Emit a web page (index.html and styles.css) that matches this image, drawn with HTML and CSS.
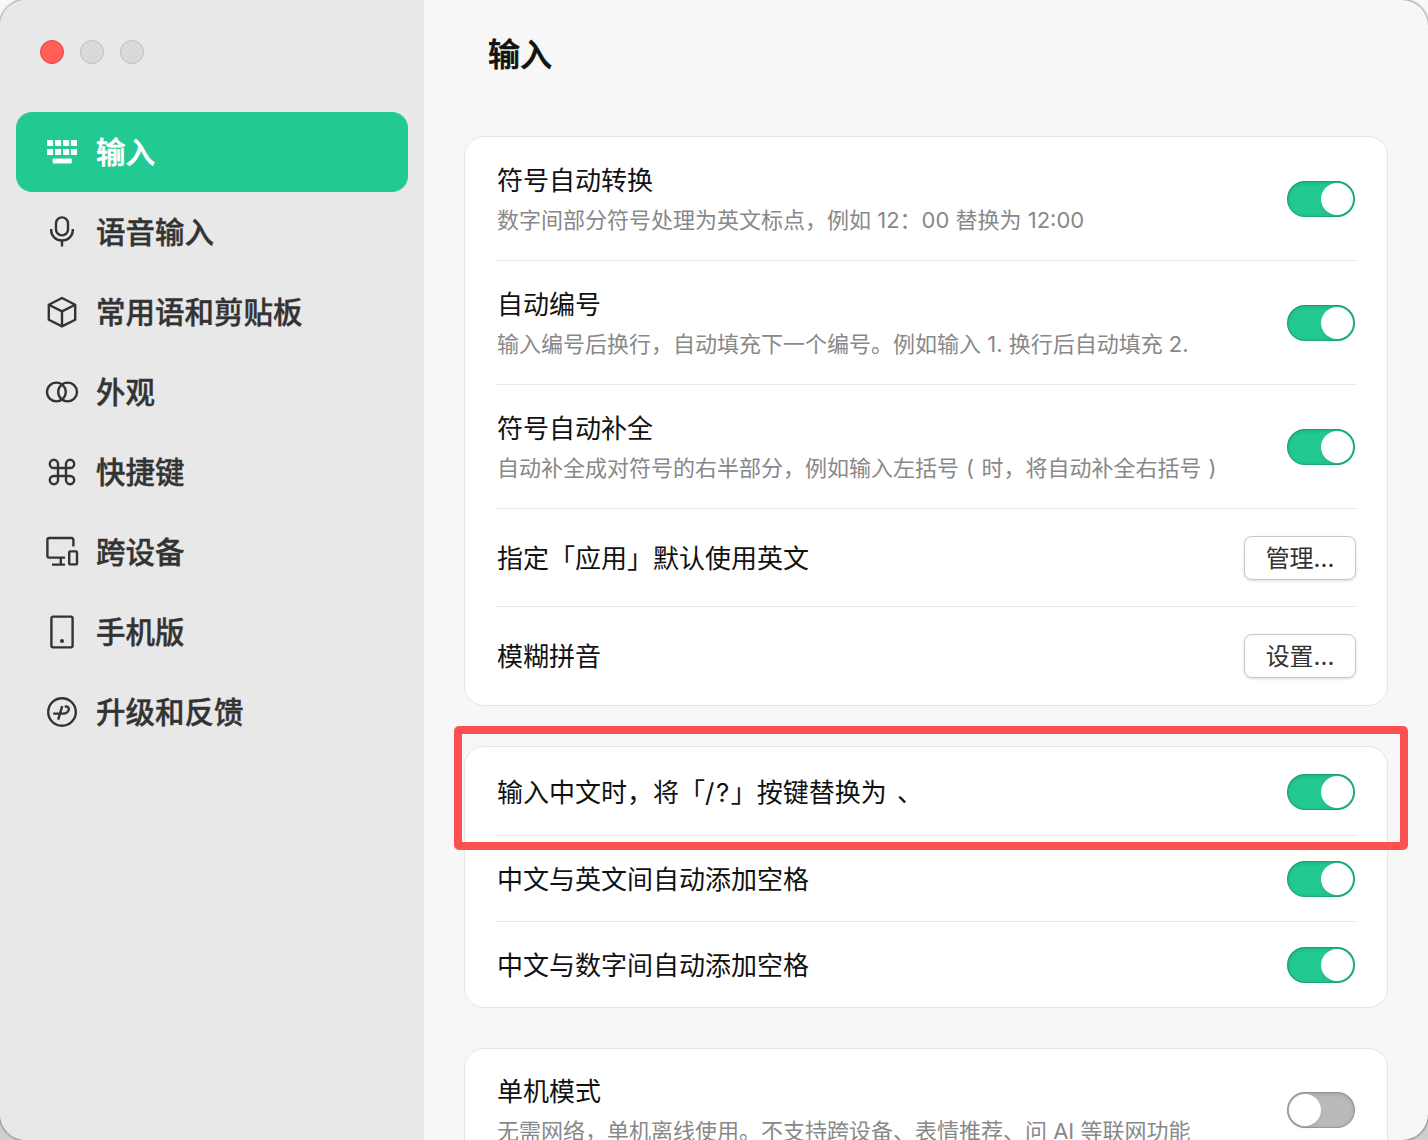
FILE: index.html
```html
<!DOCTYPE html>
<html lang="zh-CN">
<head>
    <meta charset="UTF-8">
    <title>输入</title>
    <link rel="stylesheet" href="styles.css">
</head>
<body>
    <div class="window">
        <aside class="sidebar">
            <div class="traffic-lights">
                <span class="light close"></span>
                <span class="light"></span>
                <span class="light"></span>
            </div>
            <nav class="nav">
                <a class="nav-item active">
                    <svg class="icon" viewBox="0 0 36 36">
                        <g fill="#fff">
                            <rect x="3" y="6" width="6.2" height="6" rx="0.8"/>
                            <rect x="11" y="6" width="6.2" height="6" rx="0.8"/>
                            <rect x="19" y="6" width="6.2" height="6" rx="0.8"/>
                            <rect x="26.8" y="6" width="6.2" height="6" rx="0.8"/>
                            <rect x="3" y="15" width="6.2" height="6" rx="0.8"/>
                            <rect x="11" y="15" width="6.2" height="6" rx="0.8"/>
                            <rect x="19" y="15" width="6.2" height="6" rx="0.8"/>
                            <rect x="26.8" y="15" width="6.2" height="6" rx="0.8"/>
                            <rect x="8.6" y="24.6" width="19.2" height="4.8" rx="0.8"/>
                        </g>
                    </svg>
                    <span>输入</span>
                </a>
                <a class="nav-item">
                    <svg class="icon" viewBox="0 0 36 36">
                        <rect x="12" y="3.4" width="12" height="18" rx="6"/>
                        <path d="M7.2 15v1.6a10.8 9.8 0 0 0 21.6 0V15M18 26.4v6.2"/>
                    </svg>
                    <span>语音输入</span>
                </a>
                <a class="nav-item">
                    <svg class="icon" viewBox="0 0 36 36">
                        <path d="M18 4l13.2 6.8v15L18 32.4 4.8 25.8v-15zM4.8 10.8L18 17.4l13.2-6.6M18 17.4v15"/>
                    </svg>
                    <span>常用语和剪贴板</span>
                </a>
                <a class="nav-item">
                    <svg class="icon" viewBox="0 0 36 36">
                        <circle cx="12.4" cy="18" r="9.4"/>
                        <circle cx="23.6" cy="18" r="9.4"/>
                    </svg>
                    <span>外观</span>
                </a>
                <a class="nav-item">
                    <svg class="icon" viewBox="0 0 36 36">
                        <path d="M14 14h8v8h-8zM14 14H9.9A4.1 4.1 0 1 1 14 9.9zM22 14V9.9a4.1 4.1 0 1 1 4.1 4.1zM22 22h4.1a4.1 4.1 0 1 1-4.1 4.1zM14 22v4.1A4.1 4.1 0 1 1 9.9 22z"/>
                    </svg>
                    <span>快捷键</span>
                </a>
                <a class="nav-item">
                    <svg class="icon" viewBox="0 0 36 36">
                        <path d="M29.4 12.6V5.8a1.8 1.8 0 0 0-1.8-1.8H5.2a1.8 1.8 0 0 0-1.8 1.8v16a1.8 1.8 0 0 0 1.8 1.8H21M8 30.6h13M16.8 23.6v7"/>
                        <rect x="25.2" y="17.4" width="7.8" height="13" rx="1"/>
                    </svg>
                    <span>跨设备</span>
                </a>
                <a class="nav-item">
                    <svg class="icon" viewBox="0 0 36 36">
                        <rect x="7.4" y="2.6" width="21.2" height="30.8" rx="1.8"/>
                        <circle class="dot" cx="18" cy="27" r="2"/>
                    </svg>
                    <span>手机版</span>
                </a>
                <a class="nav-item">
                    <svg class="icon" viewBox="0 0 36 36">
                        <circle cx="18" cy="18" r="13.8"/>
                        <path d="M18.2 12.2l-4 13.4M9.2 19.6h9.6c3.6 0 6-2 6-4.6 0-2.2-2-3-4-2.2"/>
                    </svg>
                    <span>升级和反馈</span>
                </a>
            </nav>
        </aside>

        <main class="content">
            <h1 class="page-title">输入</h1>

            <section class="card">
                <div class="row tall">
                    <div class="text">
                        <div class="label">符号自动转换</div>
                        <div class="desc">数字间部分符号处理为英文标点，例如 12：00 替换为 12:00</div>
                    </div>
                    <span class="toggle on"></span>
                </div>
                <div class="row tall">
                    <div class="text">
                        <div class="label">自动编号</div>
                        <div class="desc">输入编号后换行，自动填充下一个编号。例如输入 1. 换行后自动填充 2.</div>
                    </div>
                    <span class="toggle on"></span>
                </div>
                <div class="row tall">
                    <div class="text">
                        <div class="label">符号自动补全</div>
                        <div class="desc">自动补全成对符号的右半部分，例如输入左括号<span class="paren"> ( </span>时，将自动补全右括号<span class="paren"> )</span></div>
                    </div>
                    <span class="toggle on"></span>
                </div>
                <div class="row medium">
                    <div class="label">指定「应用」默认使用英文</div>
                    <button class="btn">管理...</button>
                </div>
                <div class="row medium last">
                    <div class="label">模糊拼音</div>
                    <button class="btn">设置...</button>
                </div>
            </section>

            <section class="card">
                <div class="row first">
                    <div class="label">输入中文时，将「<span class="key">/?</span>」按键替换为<span class="gap"> </span>、</div>
                    <span class="toggle on"></span>
                </div>
                <div class="row">
                    <div class="label">中文与英文间自动添加空格</div>
                    <span class="toggle on"></span>
                </div>
                <div class="row short last">
                    <div class="label">中文与数字间自动添加空格</div>
                    <span class="toggle on"></span>
                </div>
                <div class="highlight"></div>
            </section>

            <section class="card">
                <div class="row offline last">
                    <div class="text">
                        <div class="label">单机模式</div>
                        <div class="desc">无需网络，单机离线使用。不支持跨设备、表情推荐、问 AI 等联网功能</div>
                    </div>
                    <span class="toggle"></span>
                </div>
            </section>
        </main>
    </div>
</body>
</html>
```
FILE: styles.css
```css
* {
    box-sizing: border-box;
}

body {
    margin: 0;
    height: 1140px;
    overflow: hidden;
    background-color: #e4e4e4;
    background-image: linear-gradient(#f8f8f8, #cfcfcf);
    font-family: Inter, "Noto Sans CJK SC", sans-serif;
}

.window {
    display: flex;
    height: 1140px;
    border-radius: 26px;
    overflow: hidden;
    background-color: #f7f7f7;
    box-shadow: 0 0 2px 1px rgba(0, 0, 0, 0.4);
}

/* Sidebar */
.sidebar {
    width: 424px;
    flex-shrink: 0;
    padding: 40px 16px 0;
    background-color: #e8e8e8;
}

.traffic-lights {
    display: flex;
    gap: 16px;
    padding-left: 24px;
    margin-bottom: 48px;
}

.light {
    width: 24px;
    height: 24px;
    border-radius: 50%;
    background-color: #d9d9d9;
    border: 1px solid #bebebe;
}

.light.close {
    background-color: #ff5f57;
    border-color: #e2463f;
}

.nav-item {
    display: flex;
    align-items: center;
    gap: 16px;
    height: 80px;
    padding-left: 28px;
    border-radius: 16px;
    color: #333;
    font-size: 29.5px;
    font-weight: 500;
    line-height: 40px;
    -webkit-text-stroke: 0.4px;
}

.nav-item.active {
    background-color: #23c993;
    color: #fff;
    -webkit-text-stroke: 0.6px;
}

.icon {
    width: 36px;
    height: 36px;
    fill: none;
    stroke: #333;
    stroke-width: 2.4;
    stroke-linejoin: round;
}

.active .icon {
    stroke: none;
}

.icon .dot {
    fill: #333;
    stroke: none;
}

/* Content */
.content {
    flex: 1;
    padding: 33px 40px 0;
}

.page-title {
    margin: 0 0 59px 24px;
    font-size: 32px;
    font-weight: 500;
    line-height: 44px;
    color: #111;
    -webkit-text-stroke: 0.7px;
}

.card {
    position: relative;
    margin-bottom: 40px;
    padding: 0 31px;
    background-color: #fff;
    border: 1px solid #e5e5e5;
    border-radius: 20px;
}

.row {
    display: flex;
    align-items: center;
    justify-content: space-between;
    height: 86px;
    padding-left: 1px;
    border-bottom: 1px solid #e8e8e8;
}

.row.tall {
    height: 124px;
}

.row.medium {
    height: 98px;
}

.row.first {
    height: 89px;
    padding-top: 1px;
}

.row.short {
    height: 85px;
    padding-top: 2px;
}

.row.offline {
    height: 122px;
}

.row.last {
    border-bottom-color: transparent;
}

.label {
    padding-top: 2px;
    font-size: 26px;
    line-height: 36px;
    color: #111;
    white-space: pre;
}

.text .label {
    padding-top: 1px;
}

.key {
    letter-spacing: 1.5px;
}

.gap {
    letter-spacing: 3px;
}

.desc {
    margin-top: 5px;
    font-size: 22px;
    line-height: 32px;
    color: #888;
    white-space: pre;
}

.paren {
    letter-spacing: 0.7px;
}

.toggle {
    display: flex;
    flex-shrink: 0;
    width: 68px;
    height: 36px;
    margin-right: 1px;
    padding: 2px;
    border-radius: 18px;
    background-color: #bababa;
    box-shadow: inset 0 0 0 1px rgba(0, 0, 0, 0.12), inset 0 1px 5px rgba(0, 0, 0, 0.2);
}

.toggle::after {
    content: "";
    width: 32px;
    height: 32px;
    border-radius: 50%;
    background-color: #fff;
    box-shadow: 0 3px 5px rgba(0, 0, 0, 0.06);
}

.toggle.on {
    justify-content: flex-end;
    background-color: #23c993;
}

.btn {
    width: 112px;
    height: 44px;
    padding: 2px 0 0;
    background-color: #fff;
    border: 1px solid #c8c8c8;
    border-radius: 8px;
    box-shadow: 0 1px 3px rgba(0, 0, 0, 0.14);
    font-family: inherit;
    font-size: 24px;
    line-height: 40px;
    color: #333;
}

/* Marker frame over the first row of the card */
.highlight {
    position: absolute;
    top: -21px;
    left: -11px;
    width: 954px;
    height: 124px;
    border: 8px solid #fb5151;
    border-radius: 5px;
}
```
